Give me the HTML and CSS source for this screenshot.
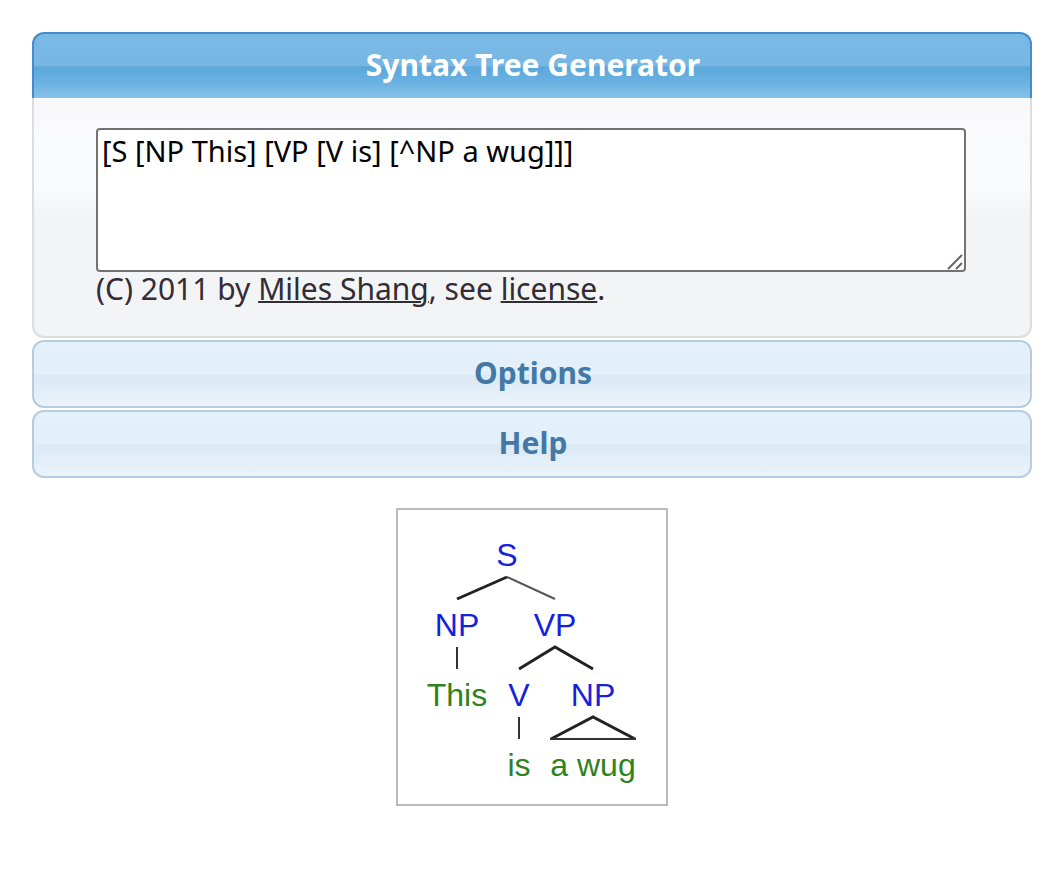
FILE: index.html
```html
<!DOCTYPE html>
<html lang="en">
<head>
<meta charset="utf-8">
<title>Syntax Tree Generator</title>
<link rel="stylesheet" href="styles.css">
</head>
<body>
<main class="page">
  <div class="accordion">
    <section>
      <h1 class="heading"><button type="button" class="tab tab-active" aria-expanded="true">Syntax Tree Generator</button></h1>
      <div class="panel">
        <div class="editor">
          <textarea class="source" aria-label="Phrase in bracket notation" spellcheck="false">[S [NP This] [VP [V is] [^NP a wug]]]</textarea>
          <svg class="grip" width="16" height="16" viewBox="0 0 16 16" aria-hidden="true">
            <path d="M1 15L15 1M9 15L15 9"/>
          </svg>
        </div>
        <p class="credit">(C) 2011 by <a href="#author">Miles Shang</a>, see <a href="#license">license</a>.</p>
      </div>
    </section>
    <h2 class="heading"><button type="button" class="tab" aria-expanded="false">Options</button></h2>
    <h2 class="heading"><button type="button" class="tab" aria-expanded="false">Help</button></h2>
  </div>
  <svg class="tree" width="272" height="298" viewBox="0 0 268 294" role="img" aria-label="Syntax tree">
    <g class="branches">
      <path class="heavy" d="M59 89L109 67"/>
      <path class="light" d="M109 67L157 89"/>
      <path class="heavy" d="M121 159L157 137L195 159"/>
      <path d="M59 137V159M121 207V229"/>
      <path class="heavy" d="M153 229L195 207L237 229"/>
      <path d="M152 229H238"/>
    </g>
    <g class="phrase">
      <text x="109" y="56">S</text>
      <text x="59" y="126">NP</text>
      <text x="157" y="126">VP</text>
      <text x="121" y="196">V</text>
      <text x="195" y="196">NP</text>
    </g>
    <g class="word">
      <text x="59" y="196">This</text>
      <text x="121" y="266">is</text>
      <text x="195" y="266">a wug</text>
    </g>
  </svg>
</main>
</body>
</html>
```
FILE: styles.css
```css
* {
  box-sizing: border-box;
}

body {
  margin: 0;
  background: #fff;
  color: #362b36;
  font-family: "Lucida Grande", "Noto Sans", sans-serif;
  font-size: 30px;
}

.page {
  display: flex;
  flex-direction: column;
  gap: 30px;
  padding: 32px 26px 32px 32px;
}

.accordion {
  display: flex;
  flex-direction: column;
  gap: 2px;
}

.heading {
  margin: 0;
  font-size: 30px;
}

.tab {
  display: block;
  width: 100%;
  padding: 11px 28px 13px 30px;
  border: 2px solid #b5cde0;
  border-radius: 12px;
  background: linear-gradient(#e4f1fa 0%, #e3f0f9 50%, #dae9f5 52%, #ebf3fb 100%);
  color: #4279a5;
  font: bold 30px/40px "Lucida Grande", "Noto Sans", sans-serif;
  text-align: center;
}

.tab-active {
  border-color: #468ccb;
  border-bottom: 0;
  border-radius: 12px 12px 0 0;
  background: linear-gradient(#7ab8e6 0%, #78b7e4 49%, #5ba8dc 52%, #6ab2e2 76%, #87c2e9 100%);
  color: #fff;
}

.panel {
  padding: 30px 64px 30px 62px;
  border: 2px solid #dcdddd;
  border-top: 0;
  border-radius: 0 0 12px 12px;
  background: linear-gradient(#f9f9fb 0, #fafbfd 90px, #f2f4f5 116px, #f3f4f6 100%);
}

.editor {
  position: relative;
  display: flex;
}

.source {
  width: 100%;
  height: 144px;
  padding: 3px 4px;
  border: 2px solid #737373;
  border-radius: 4px;
  background: #fff;
  color: #000;
  font: 29px/36px "Lucida Grande", "Noto Sans", sans-serif;
  resize: none;
}

.grip {
  position: absolute;
  right: 3px;
  bottom: 2px;
  fill: none;
  stroke: #666;
  stroke-width: 2;
}

.credit {
  margin: 0;
  line-height: 34px;
}

.credit a {
  color: #312d32;
  text-decoration-thickness: 2px;
}

.tree {
  align-self: center;
  border: 2px solid #bbb;
  font: 32px "Liberation Sans", Arial, sans-serif;
  text-anchor: middle;
}

.branches {
  fill: none;
  stroke: #333;
  stroke-width: 2;
}

.heavy {
  stroke: #222;
  stroke-width: 3;
}

.light {
  stroke: #555;
}

.phrase {
  fill: #1522dc;
}

.word {
  fill: #2f8220;
}
```
